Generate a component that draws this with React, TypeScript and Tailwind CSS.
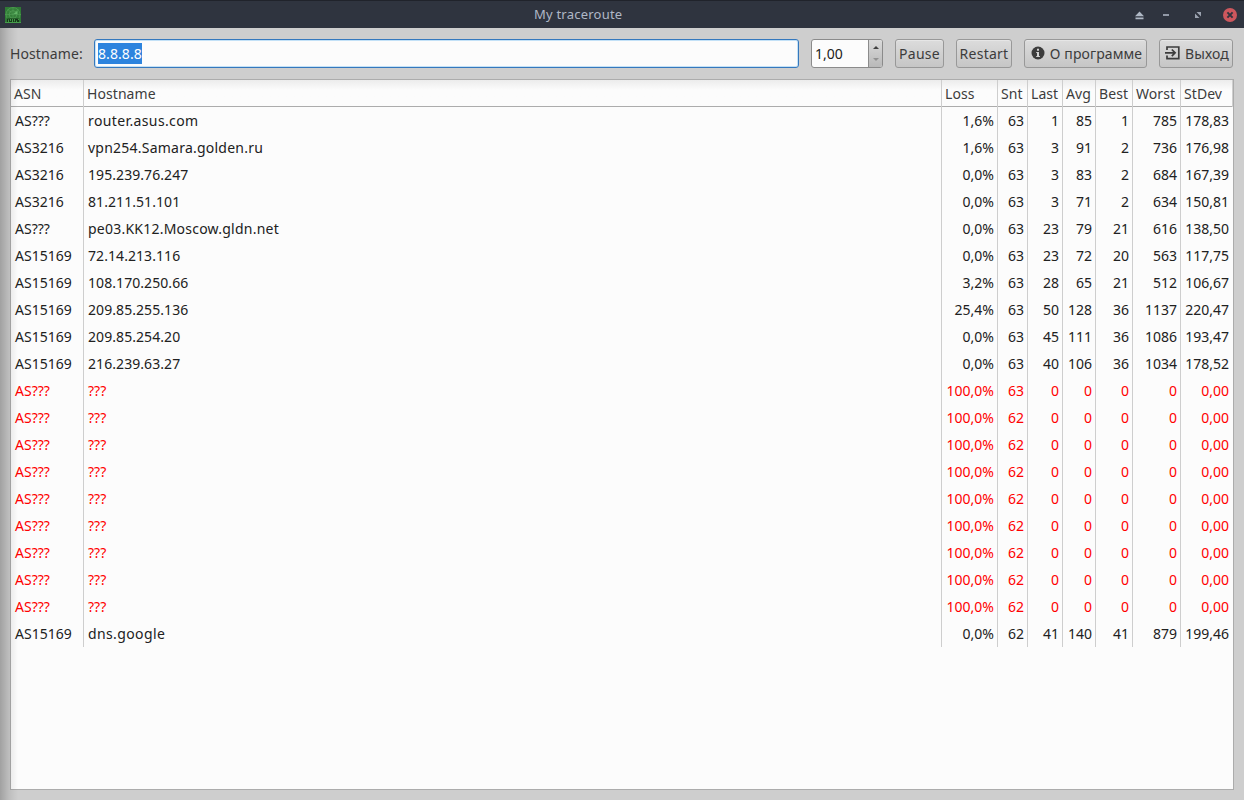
import type { ReactNode } from "react";

type Hop = [string, string, string, string, string, string, string, string, string];

const dead = (snt: string): Hop => ["AS???", "???", "100,0%", snt, "0", "0", "0", "0", "0,00"];

const hops: Hop[] = [
  ["AS???", "router.asus.com", "1,6%", "63", "1", "85", "1", "785", "178,83"],
  ["AS3216", "vpn254.Samara.golden.ru", "1,6%", "63", "3", "91", "2", "736", "176,98"],
  ["AS3216", "195.239.76.247", "0,0%", "63", "3", "83", "2", "684", "167,39"],
  ["AS3216", "81.211.51.101", "0,0%", "63", "3", "71", "2", "634", "150,81"],
  ["AS???", "pe03.KK12.Moscow.gldn.net", "0,0%", "63", "23", "79", "21", "616", "138,50"],
  ["AS15169", "72.14.213.116", "0,0%", "63", "23", "72", "20", "563", "117,75"],
  ["AS15169", "108.170.250.66", "3,2%", "63", "28", "65", "21", "512", "106,67"],
  ["AS15169", "209.85.255.136", "25,4%", "63", "50", "128", "36", "1137", "220,47"],
  ["AS15169", "209.85.254.20", "0,0%", "63", "45", "111", "36", "1086", "193,47"],
  ["AS15169", "216.239.63.27", "0,0%", "63", "40", "106", "36", "1034", "178,52"],
  dead("63"),
  ...Array.from({ length: 8 }, () => dead("62")),
  ["AS15169", "dns.google", "0,0%", "62", "41", "140", "41", "879", "199,46"],
];

const headers = ["ASN", "Hostname", "Loss", "Snt", "Last", "Avg", "Best", "Worst", "StDev"];
const grid = "grid grid-cols-[73px_858px_56px_30px_35px_33px_37px_48px_52px]";

const hostTracking = (host: string) => {
  if (host === "???") return "tracking-normal";
  if (/^[\d.]+$/.test(host)) return "tracking-[0.07px]";
  return host.length > 20 ? "tracking-[0.23px]" : "tracking-[0.38px]";
};

function AppIcon() {
  return (
    <svg width="16" height="16" viewBox="0 0 16 16" fill="none">
      <rect width="16" height="16" fill="#2f7a35" />
      <circle cx="8" cy="7.5" r="7" fill="#35803a" stroke="#57a35b" strokeWidth=".6" />
      <circle cx="8" cy="7.5" r="3.8" stroke="#5aa55e" strokeWidth=".6" />
      <path d="M8 0v11M0 7.5h16M8 7.5l5.5-5.5M2.5 2l5.5 5.5" stroke="#57a35b" strokeWidth=".5" />
      <path d="M8.5 7l4-3.5v3.5z" fill="#62b566" />
      <path d="M2 11.5h12V15H2z" fill="#153a18" />
      <path d="M3.5 15v-2.5M5.5 14v-2M7.5 15v-3M9.5 14.5v-2.5M11.5 15v-1.5M13.5 13v-1M0 15.5h16" stroke="#49a04e" strokeWidth=".9" />
    </svg>
  );
}

function Button({ className, children }: { className: string; children: ReactNode }) {
  return (
    <button
      className={`flex h-[29px] shrink-0 items-center justify-center whitespace-nowrap rounded-[3px] border border-[#989898] bg-linear-to-b from-[#dcdcdc] to-[#c6c6c6] text-[#3c3c3c] shadow-[inset_0_1px_0_#e6e6e6] ${className}`}
    >
      {children}
    </button>
  );
}

export default function App() {
  return (
    <div className="relative flex h-[800px] w-[1244px] flex-col overflow-hidden bg-[#cecece] font-['Noto_Sans',sans-serif] text-[14px] leading-[27px] text-[#212121]">
      <header className="flex h-[28px] shrink-0 items-center border-t border-[#20232b] bg-[#2f343f] pl-[5px] pr-[5px] text-[13px] text-[#afb8c6]">
        <AppIcon />
        <h1 className="flex-1 pl-[513px] tracking-[0.22px]">My traceroute</h1>
        <svg width="104" height="16" viewBox="0 0 104 16">
          <path d="M0 9.3L4.5 4.5 9 9.3zM.5 10.5h8v1.7h-8z" fill="#afb8c5" />
          <path d="M28 7h6v2h-6z" fill="#9299a6" />
          <path d="M61.5 5h4.5v4.5zM60 6.5l4.5 4.5H60z" fill="#9ba2af" />
          <circle cx="95" cy="8" r="7" fill="#cc575d" />
          <path d="M92.4 5.4l5.2 5.2M97.6 5.4l-5.2 5.2" stroke="#2f343f" strokeWidth="2" />
        </svg>
      </header>

      <div className="flex h-[51px] shrink-0 items-center pb-px pl-[10px] pr-[11px]">
        <label htmlFor="host" className="w-[84px] shrink-0 tracking-[0.1px] text-[#3c3c3c]">Hostname:</label>
        <div id="host" className="flex h-[29px] w-[705px] shrink-0 items-center rounded-[3px] border border-[#3578bd] bg-[#fcfcfc] px-[3px] shadow-[inset_0_0_0_1px_#c3e1f7]">
          <span className="h-[21px] w-[44px] whitespace-nowrap bg-[#2d84de] leading-[21px] tracking-[0.07px] text-white">8.8.8.8</span>
        </div>
        <div className="ml-[12px] flex h-[29px] w-[72px] shrink-0 overflow-hidden rounded-[3px] border border-[#8b8b8b] bg-[#fcfcfc]">
          <span className="w-[56px] pl-[3px]">1,00</span>
          <div className="flex w-[14px] flex-col items-center justify-between border-l border-[#8b8b8b] bg-linear-to-b from-[#dadada] to-[#b9b9b9] pb-[6px] pt-[6px]">
            <svg width="6" height="3" viewBox="0 0 6 3"><path d="M0 3L3 0l3 3z" fill="#404040" /></svg>
            <svg width="6" height="3" viewBox="0 0 6 3"><path d="M0 0l3 3 3-3z" fill="#929292" /></svg>
          </div>
        </div>
        <Button className="ml-[12px] w-[49px] tracking-[0.3px]">Pause</Button>
        <Button className="ml-[12px] w-[56px] tracking-[0.25px]">Restart</Button>
        <Button className="ml-[12px] w-[123px] gap-[5px] pl-[2px] tracking-[0.1px]">
          <svg width="14" height="14" viewBox="0 0 14 14">
            <circle cx="7" cy="7" r="6.5" fill="#3c3c3c" />
            <path d="M6 2.8h2v2H6zM5.2 6H8v4h.9v1H5.2v-1H6V7h-.8z" fill="#d2d2d2" />
          </svg>
          О программе
        </Button>
        <Button className="ml-[12px] w-[74px] gap-[5px] pl-[2px] tracking-[0.1px]">
          <svg width="15" height="14" viewBox="0 0 15 14" fill="none" stroke="#3c3c3c" strokeWidth="1.7">
            <path d="M2 4V1h11.8v11.6H2v-3M0 6.8h9.5M6.8 3.5l3.3 3.3-3.3 3.3" />
          </svg>
          Выход
        </Button>
      </div>

      <main className="ml-[10px] h-[711px] w-[1224px] shrink-0 border border-[#acacac] bg-[#fcfcfc]">
        <div className={`${grid} h-[27px] border-b border-[#acacac] bg-linear-to-b from-[#ececec] via-[#fcfcfc] via-40% to-[#fcfcfc] text-[#3c3c3c]`}>
          {headers.map((h) => (
            <div key={h} className="whitespace-nowrap border-r border-[#cecece] pl-[3px] tracking-[0.07px]">{h}</div>
          ))}
        </div>
        {hops.map((hop, r) => (
          <div key={r} className={`${grid} h-[27px] ${hop[1] === "???" ? "text-[#ff0000]" : ""}`}>
            {hop.map((value, c) => (
              <div
                key={c}
                className={`whitespace-nowrap ${c < 8 ? "border-r border-[#cecece] pr-[3px]" : "pr-[4px]"} ${c < 2 ? "pl-[4px]" : "text-right"} ${c === 1 ? hostTracking(value) : ""}`}
              >
                {value}
              </div>
            ))}
          </div>
        ))}
      </main>

      <div className="pointer-events-none absolute left-0 top-[28px] h-[772px] w-[18px] bg-linear-to-r from-black/22 via-black/8 via-50% to-transparent" />
    </div>
  );
}
